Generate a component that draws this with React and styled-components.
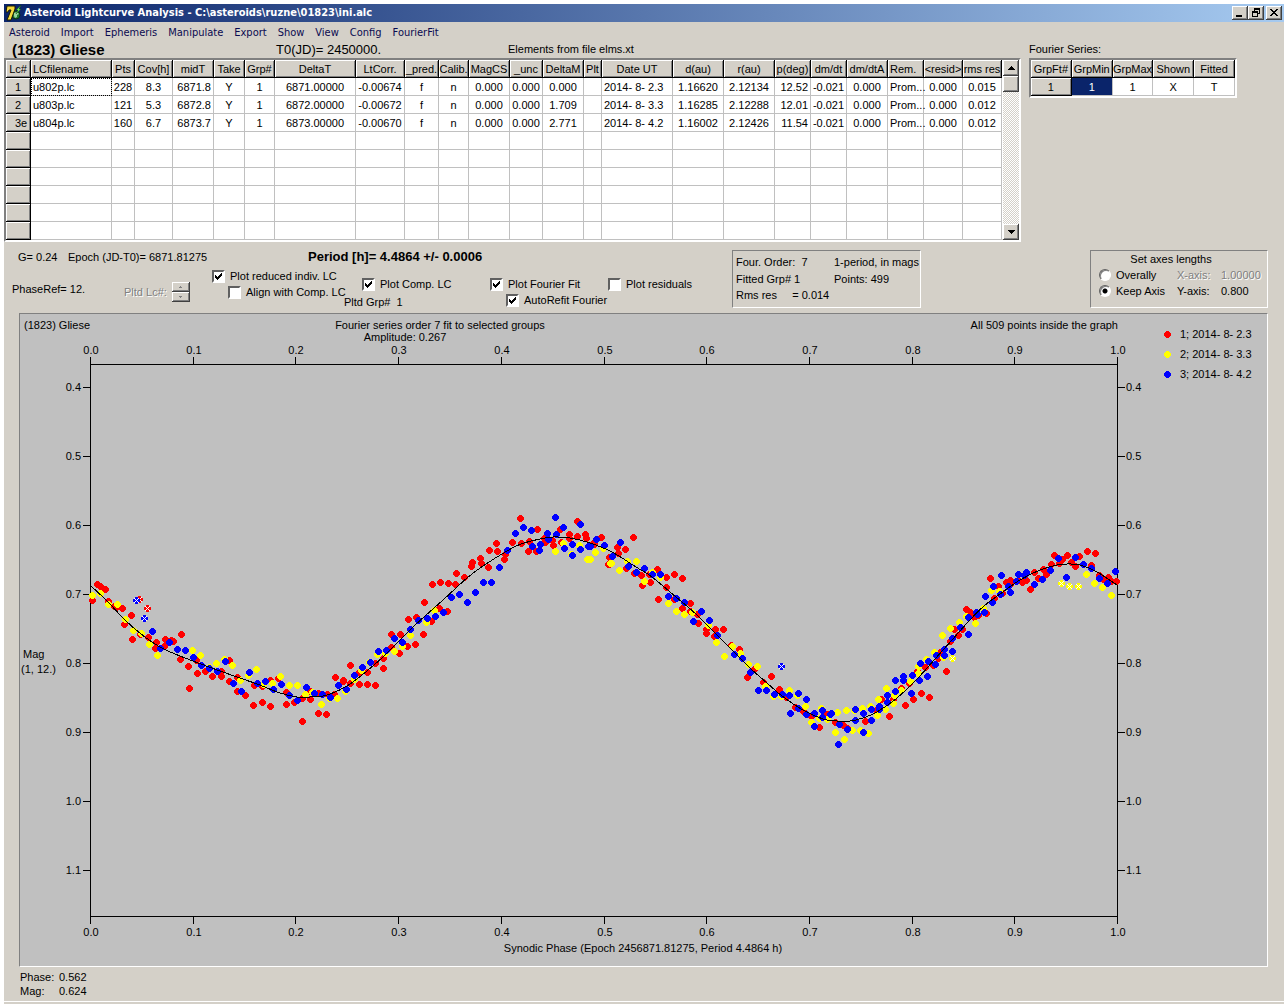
import React from "react";
import styled, { createGlobalStyle, css } from "styled-components";

const face = "#d4d0c8";
const sans = `"Liberation Sans", Arial, sans-serif`;
const tahoma = `"DejaVu Sans Condensed", "DejaVu Sans", sans-serif`;

const raised = css`
  box-shadow: inset -1px -1px #404040, inset 1px 1px #ffffff, inset -2px -2px #808080;
`;

const GlobalStyle = createGlobalStyle`
  *, *::before, *::after { box-sizing: border-box; }
  body {
    margin: 0;
    background: #ffffff;
    color: #000000;
    font: 11px/16px ${sans};
  }
  button, input { margin: 0; padding: 0; font: inherit; color: inherit; }
`;

const Window = styled.div`
  margin: 4px 4px 0;
  min-width: 1264px;
  background: ${face};
`;

const TitleBar = styled.header`
  display: flex;
  align-items: center;
  height: 18px;
  padding: 0 2px;
  background: linear-gradient(90deg, #0a246a, #a6caf0);
`;

const AppIcon = styled.svg`
  width: 16px;
  height: 16px;
`;

const Title = styled.h1`
  flex: 1;
  margin: 0 0 0 2px;
  color: #ffffff;
  font: bold 11px/18px ${tahoma};
  white-space: pre;
`;

const CaptionButton = styled.button`
  display: flex;
  width: 16px;
  height: 14px;
  margin-left: ${(p) => (p.$apart ? 2 : 0)}px;
  border: 0;
  background: ${face};
  ${raised}
`;

const MenuBar = styled.nav`
  display: flex;
  height: 20px;
`;

const MenuItem = styled.button`
  padding: 1px 6px 0 5px;
  border: 0;
  background: none;
  color: #0a0a50;
  font: 11px/19px ${tahoma};
`;

const Grids = styled.section`
  display: flex;
  align-items: flex-start;
  gap: 8px;
`;

const Caption = styled.div`
  display: flex;
  height: 16px;
  line-height: 15px;
`;

const ObjectName = styled.h2`
  width: 272px;
  margin: 0;
  padding-left: 8px;
  font-size: 15px;
  line-height: 16px;
`;

const ZeroTime = styled.span`
  width: 232px;
  font-size: 13px;
`;

const GridFrame = styled.div`
  display: flex;
  gap: 1px;
  width: max-content;
  border: 2px solid;
  border-color: #808080 #ffffff #ffffff #808080;
  box-shadow: inset -1px -1px ${face};
  background: #ffffff;
`;

const DataTable = styled.table`
  table-layout: fixed;
  width: ${(p) => p.$width}px;
  border-collapse: separate;
  border-spacing: 0;
`;

const bevel = css`
  border-color: #000000;
  background: ${face};
  box-shadow: inset 1px 1px #ffffff, inset -1px -1px #808080;
`;

const Cell = styled.td`
  height: 18px;
  padding-top: 2px;
  padding-right: ${(p) => (p.$align === "right" ? 2 : 0)}px;
  padding-bottom: 0;
  padding-left: ${(p) => (p.$align === "left" ? 2 : 0)}px;
  border: 0 solid #c0c0c0;
  border-width: 0 1px 1px 0;
  line-height: 15px;
  text-align: ${(p) => p.$align || "center"};
  white-space: pre;
  ${(p) => p.$focused && css`outline: 1px dotted #000000; outline-offset: -1px;`}
  ${(p) => p.$selected && css`background: #0a246a; color: #ffffff;`}
`;

const HeadCell = styled(Cell).attrs({ as: "th" })`
  font-weight: normal;
  ${bevel}
`;

const ScrollBar = styled.div`
  display: flex;
  flex-direction: column;
  width: 16px;
  background: repeating-conic-gradient(#ffffff 0 25%, ${face} 0 50%) 0 0 / 2px 2px;
`;

const ScrollButton = styled.button`
  display: flex;
  align-items: center;
  justify-content: center;
  height: 16px;
  border: 0;
  background: ${face};
  ${raised}

  &:last-child { margin-top: auto; }
`;

const Controls = styled.section`
  display: flex;
  align-items: flex-start;
  height: 71px;
  padding-right: 16px;
`;

const Settings = styled.div`
  width: 728px;
  padding-top: 5px;
`;

const Readouts = styled.div`
  display: flex;
  height: 21px;
  padding-left: 14px;
  line-height: 20px;
  white-space: pre;
`;

const Readout = styled.span`
  width: ${(p) => p.$width}px;
`;

const Period = styled.strong`
  font-size: 13px;
`;

const Options = styled.div`
  display: grid;
  grid-template-columns: 112px 88px 132px 146px 118px auto;
  padding-left: 8px;
`;

const OptionColumn = styled.div`
  display: flex;
  flex-direction: column;
  padding-top: ${(p) => p.$drop || 0}px;
`;

const Check = styled.label`
  display: flex;
  align-items: center;
  gap: 5px;
  height: 16px;
  padding-left: ${(p) => p.$indent || 0}px;
  white-space: nowrap;
`;

const CheckInput = styled.input.attrs({ type: "checkbox" })`
  appearance: none;
  width: 13px;
  height: 13px;
  border: 2px solid;
  border-color: #606060 #ffffff #ffffff #606060;
  background: #ffffff;
`;

const CheckBox = styled.span`
  display: grid;
  width: 13px;
  height: 13px;

  > * { grid-area: 1 / 1; }
  > svg { pointer-events: none; }
  > input:not(:checked) + svg { visibility: hidden; }
`;

const PlottedGroup = styled.div`
  display: flex;
  gap: 6px;
  padding-top: 2px;
`;

const PlottedCurve = styled.div`
  display: flex;
  align-items: center;
  gap: 5px;
  height: 22px;
  color: #808080;
  text-shadow: 1px 1px #ffffff;
`;

const Spinner = styled.div`
  display: flex;
  flex-direction: column;
`;

const SpinButton = styled.button`
  display: flex;
  align-items: center;
  justify-content: center;
  width: 18px;
  height: 10px;
  border: 0;
  background: ${face};
  ${raised}
`;

const Box = styled.div`
  width: ${(p) => p.$width}px;
  height: 58px;
  margin-top: 8px;
  border: 1px solid;
  border-color: #808080 #ffffff #ffffff #808080;
`;

const FitInfo = styled(Box)`
  display: grid;
  grid-template-columns: 98px auto;
  padding: 3px;
  white-space: pre;
`;

const AxesBox = styled(Box).attrs({ as: "fieldset" })`
  margin-left: auto;
  margin-right: 0;
  padding: 0 4px 0 8px;
`;

const AxesTitle = styled.div`
  text-align: center;
  padding-right: 20px;
  line-height: 16px;
`;

const AxisRow = styled.div`
  display: grid;
  grid-template-columns: 78px 44px auto;
  line-height: 16px;
`;

const RadioLabel = styled.label`
  display: flex;
  align-items: center;
  gap: 5px;
`;

const Radio = styled.input.attrs({ type: "radio" })`
  appearance: none;
  width: 12px;
  height: 12px;
  border: 1px solid;
  border-color: #606060 #ffffff #ffffff #606060;
  border-radius: 50%;
  background: #ffffff;
  box-shadow: inset 1px 1px #808080;

  &:checked {
    background: radial-gradient(circle, #000000 2px, #ffffff 3px);
  }
`;

const Dim = styled.span`
  ${(p) => p.$off && css`color: #808080; text-shadow: 1px 1px #ffffff;`}
`;

const Plot = styled.main`
  margin: 0 16px 0 15px;
  border: 1px solid;
  border-color: #808080 #ffffff #ffffff #808080;
  background: #c0c0c0;
`;

const Chart = styled.svg`
  display: block;
  width: 100%;
  height: auto;
  font: 11px ${sans};
`;

const Status = styled.footer`
  display: grid;
  grid-template-columns: 39px auto;
  margin: 0;
  padding: 3px 16px 3px;
  line-height: 14px;
`;

const BottomEdge = styled.div`
  height: 3px;
  border-top: 1px solid #ffffff;
`;

const menus = ["Asteroid", "Import", "Ephemeris", "Manipulate", "Export", "Show", "View", "Config", "FourierFit"];

const curveColumns = [
  ["Lc#", 25], ["LCfilename", 81, "left"], ["Pts", 23], ["Cov[h]", 38], ["midT", 41, "right"],
  ["Take", 31], ["Grp#", 30], ["DeltaT", 81], ["LtCorr.", 49], ["_pred.", 34], ["Calib.", 30],
  ["MagCS", 41], ["_unc", 33], ["DeltaM", 41], ["Plt", 18], ["Date UT", 71, "left"],
  ["d(au)", 51], ["r(au)", 51], ["p(deg)", 36, "right"], ["dm/dt", 36], ["dm/dtA", 41],
  ["Rem.", 36, "left"], ["<resid>", 39], ["rms res", 39],
];
const leftHeads = ["LCfilename", "Rem."];

const curveRows = [
  ["1", "u802p.lc", "228", "8.3", "6871.8", "Y", "1", "6871.00000", "-0.00674", "f", "n", "0.000", "0.000", "0.000", "", "2014- 8- 2.3", "1.16620", "2.12134", "12.52", "-0.021", "0.000", "Prom...", "0.000", "0.015"],
  ["2", "u803p.lc", "121", "5.3", "6872.8", "Y", "1", "6872.00000", "-0.00672", "f", "n", "0.000", "0.000", "1.709", "", "2014- 8- 3.3", "1.16285", "2.12288", "12.01", "-0.021", "0.000", "Prom...", "0.000", "0.012"],
  ["  3e", "u804p.lc", "160", "6.7", "6873.7", "Y", "1", "6873.00000", "-0.00670", "f", "n", "0.000", "0.000", "2.771", "", "2014- 8- 4.2", "1.16002", "2.12426", "11.54", "-0.021", "0.000", "Prom...", "0.000", "0.012"],
  ...Array.from({ length: 6 }, () => Array(24).fill("")),
];

const seriesColumns = ["GrpFt#", "GrpMin", "GrpMax", "Shown", "Fitted"];
const seriesRow = ["1", "1", "1", "X", "T"];

/* Observations, split into phase segments. Each segment has an origin in chart
   units and flat x,y lists counted in thirds of a unit from that origin. */
const segments = [
  {
    at: [80, 560],
    red: [37,122,52,73,60,80,76,88,85,125,102,139,110,142,127,146,133,194,154,166,157,238,181,223,205,232,230,247,226,265,256,238,275,240,280,244,253,260,304,223,301,298,325,319,328,385,350,302,352,340,376,334,397,349,424,349,424,334,448,300,448,364,472,352,472,394,496,406,520,436,523,376,547,380,547,427,571,362,571,439,595,356,619,397,619,433,643,427,667,416,667,484,691,394,691,418,715,400,715,460,742,403,739,463,764,402,766,352,790,364,812,316],
    yellow: [37,106,62,100,85,132,112,133,136,179,160,211,184,221,208,253,232,286,337,271,361,286,387,322,409,310,433,297,457,316,481,361,505,346,529,328,550,373,577,370,601,349,628,376,652,376,676,403,697,398,724,433,748,415,772,415,796,394],
    blue: [217,214,241,265,268,247,292,268,316,271,340,292,364,316,388,325,412,334,436,304,460,370,484,394,508,337,532,370,556,364,580,388,604,373,628,406,652,421,679,382,703,400,727,403,751,412,775,376,799,388],
    redOut: [178,118,202,145],
    blueOut: [169,121,193,175],
  },
  {
    at: [340, 500],
    red: [10,541,31,496,31,550,58,517,82,517,58,553,82,553,106,556,106,490,130,475,130,505,154,403,181,403,154,441,178,460,202,439,226,433,250,403,205,358,229,352,253,307,277,253,274,364,298,325,322,334,301,247,325,250,346,253,349,220,372,232,397,187,394,199,421,175,424,190,448,151,445,202,469,130,472,154,493,178,497,162,517,128,541,55,544,131,568,124,565,154,589,154,592,88,612,115,617,126,637,122,640,136,661,88,664,127,688,103,688,114,712,64,712,108,736,103,740,116,760,131,784,112,808,172,806,193],
    yellow: [43,538,64,512,88,487,112,463,136,460,163,454,187,438,211,406,259,367,284,332,646,154,670,131,694,163,718,136,742,178,766,157,790,146,810,190],
    blue: [43,526,67,502,91,487,115,454,139,451,163,415,187,427,211,388,235,361,262,355,286,349,310,337,334,292,358,283,382,307,406,277,430,247,454,247,478,202,502,151,526,100,550,82,574,91,577,139,598,151,601,133,622,100,625,118,646,52,649,103,670,82,673,145,697,133,697,166,721,73,721,148,745,139,769,118,793,136],
  },
  {
    at: [590, 520],
    red: [12,72,35,52,40,82,58,112,58,133,82,82,85,100,106,88,130,52,109,146,133,160,154,166,157,196,181,187,178,162,202,148,230,172,229,202,253,163,277,175,205,238,253,238,277,265,301,250,301,275,325,310,323,284,349,328,349,340,376,328,372,349,400,328,424,376,448,388,472,472,493,449,520,488,544,469,568,508,590,532,615,562,640,574,664,588,688,622,712,582,736,607,760,616,772,626],
    yellow: [0,118,16,97,40,84,64,130,88,151,112,124,139,124,163,184,187,157,211,172,235,250,259,274,283,283,307,277,355,317,379,367,403,409,427,380,451,400,475,433,502,439,526,500,550,529,574,529,598,511,622,526,646,560,664,607,688,596,694,565,712,598,736,637,742,577,763,658,769,571,787,631,794,571,810,631],
    blue: [0,78,19,58,43,76,67,109,91,67,115,139,139,157,163,145,187,163,211,163,235,229,259,236,283,247,334,274,310,304,358,301,382,346,433,403,457,415,481,457,505,511,529,511,553,523,577,523,598,526,625,520,649,538,601,580,625,565,649,583,673,580,673,619,697,571,697,592,721,583,725,580,748,613,745,673,772,628,796,568,796,601],
    blueOut: [574,439],
  },
  {
    at: [850, 530],
    red: [46,574,80,540,95,508,118,559,130,508,154,474,166,526,190,508,214,490,238,502,178,460,203,424,227,412,250,406,264,384,272,368,289,424,301,335,313,298,325,316,338,298,349,238,361,246,372,262,386,256,410,250,421,145,433,205,446,169,458,190,469,157,481,151,481,164,505,152,517,157,530,150,541,178,553,127,565,145,580,118,589,133,604,103,613,76,628,100,637,88,652,76,664,97,676,109,688,79,712,64,724,106,736,70,748,136,760,148,775,142,785,154,800,154],
    yellow: [7,601,13,541,31,601,37,535,55,610,61,529,82,556,86,508,106,538,109,475,130,520,132,497,154,482,180,454,204,410,205,430,229,388,253,367,280,382,277,316,301,295,328,277,350,259,376,280,400,235,424,180,448,184,709,133,733,160,757,172,784,196],
    blue: [16,571,40,550,40,607,64,538,64,571,88,530,88,538,112,496,112,518,136,451,136,484,160,439,160,451,184,490,187,436,208,451,211,400,232,439,235,394,256,403,259,376,283,358,283,376,307,325,307,364,331,293,355,262,355,313,379,247,383,252,403,247,406,199,427,217,430,169,451,193,454,136,475,169,481,187,499,153,505,133,523,137,529,127,553,163,577,148,601,121,625,85,649,142,676,82,700,103,724,115,748,145,772,160,796,124],
    yellowOut: [307,385,634,160,658,169,685,169],
  },
];

const colors = { red: "#ff0000", yellow: "#ffff00", blue: "#0000ff" };

function pointsOf(key) {
  return segments.flatMap(({ at, [key]: list = [] }) => {
    const out = [];
    for (let i = 0; i < list.length; i += 2) {
      out.push([at[0] + Math.floor(list[i] / 3), at[1] + Math.floor(list[i + 1] / 3)]);
    }
    return out;
  });
}

const fit = [
  [91, 586], [108, 602], [125, 620], [141, 634], [160, 647], [180, 656], [209, 667], [237, 677],
  [257, 684], [280, 693], [297, 697], [310, 697], [327, 695], [350, 684], [383, 657], [413, 627],
  [443, 600], [467, 578], [483, 566], [507, 551], [521, 544], [540, 539], [553, 537], [570, 538],
  [590, 543], [612, 552], [636, 567], [652, 577], [676, 597], [697, 615], [717, 635], [733, 651],
  [750, 668], [767, 683], [782, 696], [803, 710], [823, 719], [837, 721], [850, 721], [863, 718],
  [877, 712], [897, 698], [918, 678], [935, 659], [952, 640], [968, 622], [984, 606], [1000, 594],
  [1020, 580], [1040, 570], [1057, 565], [1067, 564], [1080, 565], [1097, 572], [1117, 585],
];

function smoothPath(p) {
  let d = `M${p[0]}`;
  for (let i = 0; i < p.length - 1; i++) {
    const a = p[i - 1] || p[i];
    const b = p[i];
    const c = p[i + 1];
    const e = p[i + 2] || c;
    d += `C${b[0] + (c[0] - a[0]) / 6},${b[1] + (c[1] - a[1]) / 6} ${c[0] - (e[0] - b[0]) / 6},${c[1] - (e[1] - b[1]) / 6} ${c[0]},${c[1]}`;
  }
  return d;
}

const Dot = ({ x, y, color }) => (
  <path fill={color} d={`M${x - 1} ${y - 3}h3v1h1v1h1v3h-1v1h-1v1h-3v-1h-1v-1h-1v-3h1v-1h1z`} />
);

const Outlier = ({ x, y, color }) => (
  <g>
    <path fill={color} d={`M${x - 1} ${y - 3}h3v2h2v3h-2v2h-3v-2h-2v-3h2z`} />
    <path fill="#ffffff" d={`M${x - 2} ${y - 2}h1v1h-1zM${x + 2} ${y - 2}h1v1h-1zM${x - 1} ${y - 1}h1v1h-1zM${x + 1} ${y - 1}h1v1h-1zM${x} ${y}h1v1h-1zM${x - 1} ${y + 1}h1v1h-1zM${x + 1} ${y + 1}h1v1h-1zM${x - 2} ${y + 2}h1v1h-1zM${x + 2} ${y + 2}h1v1h-1z`} />
  </g>
);

const xTicks = [90, 193, 295, 398, 501, 604, 706, 809, 912, 1014, 1117];
const yTicks = [387, 456, 525, 594, 663, 732, 801, 870];
const legend = [["red", "1; 2014- 8- 2.3"], ["yellow", "2; 2014- 8- 3.3"], ["blue", "3; 2014- 8- 4.2"]];

function LightCurve() {
  return (
    <Chart viewBox="20 314 1247 652" role="img" aria-label="Composite light curve of (1823) Gliese">
      <g shapeRendering="crispEdges">
        <rect x="90.5" y="364.5" width="1027" height="552" fill="none" stroke="#000000" />
        {xTicks.map((x) => (
          <path key={x} stroke="#000000" d={`M${x + 0.5} 357V364M${x + 0.5} 917V924`} />
        ))}
        {yTicks.map((y) => (
          <path key={y} stroke="#000000" d={`M83 ${y + 0.5}H90M1118 ${y + 0.5}H1125`} />
        ))}
        {["red", "yellow", "blue"].map((c) => (
          <g key={c}>
            {pointsOf(c).map(([x, y], i) => <Dot key={i} x={x} y={y} color={colors[c]} />)}
            {pointsOf(`${c}Out`).map(([x, y], i) => <Outlier key={i} x={x} y={y} color={colors[c]} />)}
          </g>
        ))}
        <path d={smoothPath(fit)} fill="none" stroke="#000000" />
        {legend.map(([c], i) => <Dot key={c} x={1167} y={334 + i * 20} color={colors[c]} />)}
      </g>
      <g textAnchor="middle">
        {xTicks.map((x, i) => (
          <React.Fragment key={x}>
            <text x={x + 1} y="354">{(i / 10).toFixed(1)}</text>
            <text x={x + 1} y="936">{(i / 10).toFixed(1)}</text>
          </React.Fragment>
        ))}
        <text x="440" y="329">Fourier series order 7 fit to selected groups</text>
        <text x="405" y="341">Amplitude: 0.267</text>
        <text x="643" y="952">Synodic Phase (Epoch 2456871.81275, Period 4.4864 h)</text>
      </g>
      {yTicks.map((y, i) => (
        <React.Fragment key={y}>
          <text x="81" y={y + 4} textAnchor="end">{(0.4 + i / 10).toFixed(1)}</text>
          <text x="1126" y={y + 4}>{(0.4 + i / 10).toFixed(1)}</text>
        </React.Fragment>
      ))}
      <text x="24" y="329">(1823) Gliese</text>
      <text x="1118" y="329" textAnchor="end">All 509 points inside the graph</text>
      <text x="23" y="658">Mag</text>
      <text x="21" y="673">(1, 12.)</text>
      {legend.map(([c, label], i) => <text key={c} x="1180" y={338 + i * 20}>{label}</text>)}
    </Chart>
  );
}

const Arrow = ({ down, small, color = "#000000" }) => {
  const w = small ? 3 : 7;
  const h = small ? 2 : 4;
  const steps = Array.from({ length: h }, (_, i) => [i, down ? i : h - 1 - i]);
  return (
    <svg width={w} height={h} viewBox={`0 0 ${w} ${h}`} fill={color} shapeRendering="crispEdges" aria-hidden="true">
      {steps.map(([i, y]) => <rect key={i} x={i} y={y} width={w - 2 * i} height="1" />)}
    </svg>
  );
};

const Option = ({ label, checked, indent }) => (
  <Check $indent={indent}>
    <CheckBox>
      <CheckInput defaultChecked={checked} />
      <svg width="13" height="13" viewBox="0 0 13 13" shapeRendering="crispEdges" aria-hidden="true">
        <path d="M3 5h1v1h1v1h1v-1h1v-1h1v-1h1v-1h1v3h-1v1h-1v1h-1v1h-1v1h-1v-1h-1v-1h-1z" />
      </svg>
    </CheckBox>
    {label}
  </Check>
);

export default function App() {
  return (
    <>
      <GlobalStyle />
      <Window>
        <TitleBar>
          <AppIcon viewBox="0 0 16 16" aria-hidden="true">
            <circle cx="10" cy="10" r="4" fill="#1c7a34" stroke="#0c2c14" />
            <path d="M8 8l3-1 2 2-2 1v2l-2 1-1-2z" fill="#9ad49c" />
            <path d="M1 1h8v3L5 15H1L5 5H3L2 7H0z" fill="#f4d83c" stroke="#1a1a00" />
            <path d="M15 0l-5 5h2l-2 4 5-5h-2z" fill="#6cf060" stroke="#083c10" strokeWidth=".5" />
          </AppIcon>
          <Title>{"Asteroid Lightcurve Analysis - C:\\asteroids\\ruzne\\01823\\ini.alc"}</Title>
          <CaptionButton aria-label="Minimize">
            <svg width="16" height="14" shapeRendering="crispEdges"><path d="M4 9h6v2H4z" /></svg>
          </CaptionButton>
          <CaptionButton aria-label="Restore">
            <svg width="16" height="14" shapeRendering="crispEdges">
              <path fillRule="evenodd" d="M6 2h6v6h-2v3H4V5h2zM7 4v1h3v2h1V4zM5 7v3h4V7z" />
            </svg>
          </CaptionButton>
          <CaptionButton $apart aria-label="Close">
            <svg width="16" height="14" shapeRendering="crispEdges">
              <path d="M4 3h2v1h1v1h2V4h1V3h2v1h-1v1h-1v1H9v1h1v1h1v1h1v1h-2V9H9V8H7v1H6v1H4V9h1V8h1V7h1V6H6V5H5V4H4z" />
            </svg>
          </CaptionButton>
        </TitleBar>
        <MenuBar>
          {menus.map((m) => <MenuItem key={m}>{m}</MenuItem>)}
        </MenuBar>

        <Grids>
          <div>
            <Caption>
              <ObjectName>(1823) Gliese</ObjectName>
              <ZeroTime>T0(JD)= 2450000.</ZeroTime>
              <span>Elements from file elms.xt</span>
            </Caption>
            <GridFrame>
              <DataTable $width={996}>
                <colgroup>
                  {curveColumns.map(([name, width]) => <col key={name} width={width} />)}
                </colgroup>
                <thead>
                  <tr>
                    {curveColumns.map(([name]) => (
                      <HeadCell key={name} $align={leftHeads.includes(name) ? "left" : "center"}>{name}</HeadCell>
                    ))}
                  </tr>
                </thead>
                <tbody>
                  {curveRows.map((row, r) => (
                    <tr key={r}>
                      {row.map((value, c) => c === 0
                        ? <HeadCell key={c}>{value}</HeadCell>
                        : <Cell key={c} $align={curveColumns[c][2]} $focused={r === 0 && c === 1}>{value}</Cell>)}
                    </tr>
                  ))}
                </tbody>
              </DataTable>
              <ScrollBar>
                <ScrollButton aria-label="Scroll up"><Arrow /></ScrollButton>
                <ScrollButton aria-label="Scroll position" />
                <ScrollButton aria-label="Scroll down"><Arrow down /></ScrollButton>
              </ScrollBar>
            </GridFrame>
          </div>
          <div>
            <Caption>Fourier Series:</Caption>
            <GridFrame>
              <DataTable $width={204}>
                <thead>
                  <tr>{seriesColumns.map((name) => <HeadCell key={name}>{name}</HeadCell>)}</tr>
                </thead>
                <tbody>
                  <tr>
                    <HeadCell>{seriesRow[0]}</HeadCell>
                    {seriesRow.slice(1).map((value, i) => <Cell key={i} $selected={i === 0}>{value}</Cell>)}
                  </tr>
                </tbody>
              </DataTable>
            </GridFrame>
          </div>
        </Grids>

        <Controls>
          <Settings>
            <Readouts>
              <Readout $width={50}>G= 0.24</Readout>
              <Readout $width={240}>Epoch (JD-T0)= 6871.81275</Readout>
              <Period>Period [h]= 4.4864 +/- 0.0006</Period>
            </Readouts>
            <Options>
              <OptionColumn $drop={13}>PhaseRef= 12.</OptionColumn>
              <OptionColumn $drop={13}>
                <PlottedCurve>
                  <span>Pltd Lc#:</span>
                  <Spinner>
                    <SpinButton disabled aria-label="Next light curve"><Arrow small color="#808080" /></SpinButton>
                    <SpinButton disabled aria-label="Previous light curve"><Arrow small down color="#808080" /></SpinButton>
                  </Spinner>
                </PlottedCurve>
              </OptionColumn>
              <OptionColumn>
                <Option label="Plot reduced indiv. LC" checked />
                <Option label="Align with Comp. LC" indent={16} />
              </OptionColumn>
              <OptionColumn $drop={8}>
                <Option label="Plot Comp. LC" checked indent={18} />
                <PlottedGroup><span>Pltd Grp#</span><span>1</span></PlottedGroup>
              </OptionColumn>
              <OptionColumn $drop={8}>
                <Option label="Plot Fourier Fit" checked />
                <Option label="AutoRefit Fourier" checked indent={16} />
              </OptionColumn>
              <OptionColumn $drop={8}>
                <Option label="Plot residuals" />
              </OptionColumn>
            </Options>
          </Settings>
          <FitInfo $width={189}>
            <span>{"Four. Order:  7"}</span><span>1-period, in mags</span>
            <span>Fitted Grp# 1</span><span>Points: 499</span>
            <span>{"Rms res     = 0.014"}</span>
          </FitInfo>
          <AxesBox $width={178}>
            <AxesTitle>Set axes lengths</AxesTitle>
            <AxisRow>
              <RadioLabel><Radio name="axes" />Overally</RadioLabel>
              <Dim $off>X-axis:</Dim><Dim $off>1.00000</Dim>
            </AxisRow>
            <AxisRow>
              <RadioLabel><Radio name="axes" defaultChecked />Keep Axis</RadioLabel>
              <Dim>Y-axis:</Dim><Dim>0.800</Dim>
            </AxisRow>
          </AxesBox>
        </Controls>

        <Plot><LightCurve /></Plot>

        <Status>
          <span>Phase:</span><span>0.562</span>
          <span>Mag:</span><span>0.624</span>
        </Status>
        <BottomEdge />
      </Window>
    </>
  );
}
